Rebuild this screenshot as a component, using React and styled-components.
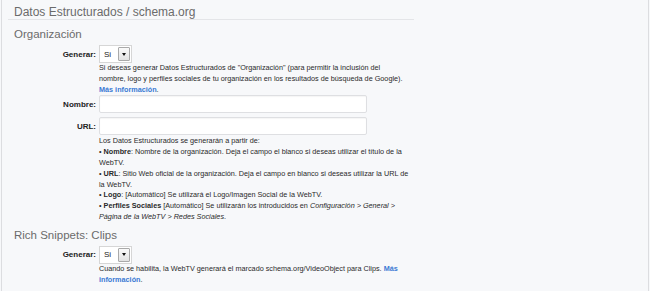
import styled, { createGlobalStyle } from "styled-components";

const GlobalStyle = createGlobalStyle`
  html, body {
    margin: 0;
    padding: 0;
    background: #f7f8fa;
  }
  body {
    font-family: "Liberation Sans", Arial, sans-serif;
  }
`;

const Panel = styled.div`
  box-sizing: border-box;
  width: 648px;
  min-height: 291px;
  margin-left: 1px;
  padding: 0 12px 0 12px;
  border-left: 1px solid #dcdde0;
  border-right: 1px solid #dcdde0;
  background: #f7f8fa;
`;

const Title = styled.h2`
  margin: 0 0 0 -6px;
  width: 400px;
  padding: 6px 0 0 6px;
  font-size: 12px;
  line-height: 13px;
  font-weight: normal;
  color: #6b6b6b;
  border-bottom: 1px solid #e4e5e8;
`;

const SectionTitle = styled.h3`
  margin: ${(p) => p.$top || "6px"} 0 4px 0;
  font-size: 11.5px;
  line-height: 14px;
  font-weight: normal;
  color: #6b6b6b;
`;

const Row = styled.div`
  display: grid;
  grid-template-columns: 82px 1fr;
  column-gap: 3px;
  align-items: center;
  margin-bottom: ${(p) => p.$gap || "0"};
`;

const Label = styled.label`
  text-align: right;
  font-size: 8px;
  font-weight: bold;
  color: #222;
`;

const SelectBox = styled.div`
  box-sizing: border-box;
  width: 33px;
  height: 18px;
  display: flex;
  align-items: center;
  justify-content: space-between;
  padding: 0 1px 0 4px;
  background: #fff;
  border: 1px solid #d6d6d6;
  font-size: 8px;
  color: #222;
`;

const SelectButton = styled.span`
  box-sizing: border-box;
  width: 12px;
  height: 14px;
  display: flex;
  align-items: center;
  justify-content: center;
  border: 1px solid #a9a9a9;
  border-radius: 1px;
  background: linear-gradient(#fafafa, #e2e2e2);
`;

const Arrow = styled.span`
  width: 0;
  height: 0;
  border-left: 2.5px solid transparent;
  border-right: 2.5px solid transparent;
  border-top: 3px solid #111;
`;

const TextInput = styled.input`
  box-sizing: border-box;
  width: 268px;
  height: 18px;
  margin: 0;
  border: 1px solid #dedfe2;
  border-radius: 2px;
  background: #fff;
  box-shadow: inset 0 1px 1px rgba(0, 0, 0, 0.04);
  outline: none;
`;

const Help = styled.div`
  width: ${(p) => p.$w || "310px"};
  margin-left: 85px;
  font-size: 7.25px;
  line-height: 10.8px;
  color: #2a2a2a;
`;

const Link = styled.a`
  color: #3a7ad4;
  font-weight: bold;
  text-decoration: none;
`;

function Select({ value }) {
  return (
    <SelectBox>
      <span>{value}</span>
      <SelectButton>
        <Arrow />
      </SelectButton>
    </SelectBox>
  );
}

export default function App() {
  return (
    <>
      <GlobalStyle />
      <Panel>
        <Title>Datos Estructurados / schema.org</Title>

        <SectionTitle $top="7px">Organización</SectionTitle>
        <Row>
          <Label>Generar:</Label>
          <Select value="Si" />
        </Row>
        <Help $w="306px">
          Si deseas generar Datos Estructurados de "Organización" (para permitir la inclusión del
          nombre, logo y perfiles sociales de tu organización en los resultados de búsqueda de
          Google). <Link href="#">Más información</Link>.
        </Help>
        <Row $gap="4px">
          <Label>Nombre:</Label>
          <TextInput type="text" />
        </Row>
        <Row $gap="1px">
          <Label>URL:</Label>
          <TextInput type="text" />
        </Row>
        <Help>
          Los Datos Estructurados se generarán a partir de:
          <br />• <b>Nombre</b>: Nombre de la organización. Deja el campo el blanco si deseas
          utilizar el título de la WebTV.
          <br />• <b>URL</b>: Sitio Web oficial de la organización. Deja el campo en blanco si
          deseas utilizar la URL de la WebTV.
          <br />• <b>Logo</b>: [Automático] Se utilizará el Logo/Imagen Social de la WebTV.
          <br />• <b>Perfiles Sociales</b> [Automático] Se utilizarán los introducidos en{" "}
          <i>Configuración &gt; General &gt; Página de la WebTV &gt; Redes Sociales</i>.
        </Help>

        <SectionTitle $top="5px">Rich Snippets: Clips</SectionTitle>
        <Row>
          <Label>Generar:</Label>
          <Select value="Si" />
        </Row>
        <Help>
          Cuando se habilita, la WebTV generará el marcado schema.org/VideoObject para Clips.{" "}
          <Link href="#">Más información</Link>.
        </Help>
      </Panel>
    </>
  );
}
